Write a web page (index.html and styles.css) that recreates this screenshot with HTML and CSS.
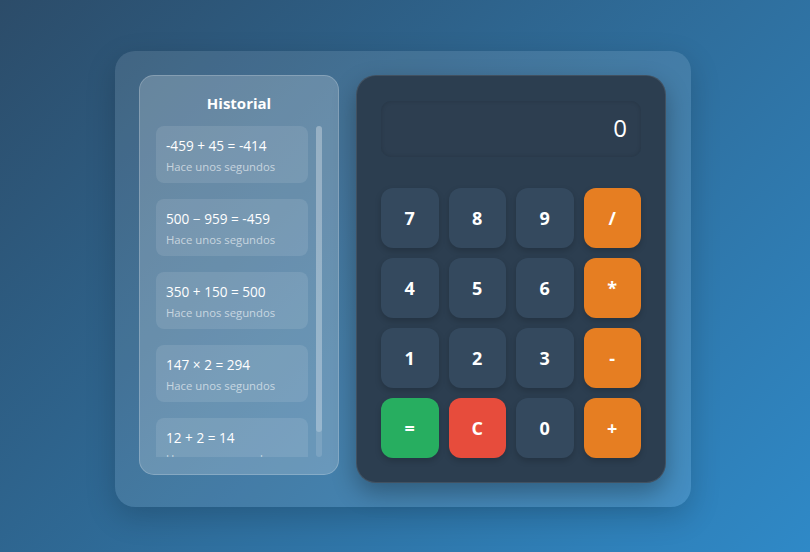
FILE: index.html
```html
<!DOCTYPE html>
<html lang="es">
<head>
<meta charset="utf-8">
<title>Calculadora</title>
<link rel="stylesheet" href="styles.css">
</head>
<body>
<div class="app">
  <aside class="history">
    <h2 class="history-title">Historial</h2>
    <div class="history-body">
      <div class="history-list">
        <div class="item"><div class="eq">-459 + 45 = -414</div><div class="time">Hace unos segundos</div></div>
        <div class="item"><div class="eq">500 − 959 = -459</div><div class="time">Hace unos segundos</div></div>
        <div class="item"><div class="eq">350 + 150 = 500</div><div class="time">Hace unos segundos</div></div>
        <div class="item"><div class="eq">147 × 2 = 294</div><div class="time">Hace unos segundos</div></div>
        <div class="item"><div class="eq">12 + 2 = 14</div><div class="time">Hace unos segundos</div></div>
      </div>
      <div class="scrollbar"><div class="thumb"></div></div>
    </div>
  </aside>
  <main class="calc">
    <div class="display">0</div>
    <div class="keys">
      <button class="key">7</button>
      <button class="key">8</button>
      <button class="key">9</button>
      <button class="key op">/</button>
      <button class="key">4</button>
      <button class="key">5</button>
      <button class="key">6</button>
      <button class="key op">*</button>
      <button class="key">1</button>
      <button class="key">2</button>
      <button class="key">3</button>
      <button class="key op">-</button>
      <button class="key eqk">=</button>
      <button class="key clear">C</button>
      <button class="key">0</button>
      <button class="key op">+</button>
    </div>
  </main>
</div>
</body>
</html>
```
FILE: styles.css
```css
* { box-sizing: border-box; }
html, body { height: 100%; }
body {
  margin: 0;
  font-family: "Open Sans", "Noto Sans", sans-serif;
  background: linear-gradient(135deg, #2c4c69 0%, #2f6f9e 55%, #2f89c7 100%);
  display: flex;
  justify-content: center;
  align-items: flex-start;
  padding-top: 51px;
  padding-right: 4px;
}
.app {
  display: flex;
  align-items: flex-start;
  gap: 17px;
  padding: 24px;
  width: 576px;
  height: 456px;
  border-radius: 20px;
  background: rgba(255, 255, 255, 0.1);
  box-shadow: 0 10px 30px rgba(0, 0, 0, 0.18);
}
.history {
  width: 200px;
  height: 400px;
  border-radius: 15px;
  background: rgba(255, 255, 255, 0.2);
  border: 1px solid rgba(255, 255, 255, 0.2);
  padding: 16px 16px 16px 16px;
  display: flex;
  flex-direction: column;
}
.history-title {
  margin: 0 0 12px 0;
  color: #fff;
  font-size: 15px;
  font-weight: 700;
  text-align: center;
  line-height: 22px;
}
.history-body {
  display: flex;
  gap: 8px;
  height: 331px;
}
.history-list {
  width: 152px;
  overflow: hidden;
  display: flex;
  flex-direction: column;
  gap: 16px;
}
.scrollbar {
  width: 6px;
  height: 100%;
  border-radius: 3px;
  background: rgba(255, 255, 255, 0.12);
}
.thumb {
  height: 306px;
  border-radius: 3px;
  background: rgba(255, 255, 255, 0.22);
}
.item {
  flex: none;
  background: rgba(255, 255, 255, 0.1);
  border-radius: 8px;
  padding: 10px 10px 10px 10px;
  height: 57px;
}
.eq {
  color: #fff;
  font-size: 13.6px;
  line-height: 20px;
}
.time {
  color: rgba(255, 255, 255, 0.6);
  font-size: 11.3px;
  line-height: 18px;
  margin-top: 2px;
}
.calc {
  width: 310px;
  height: 408px;
  background: #2c3e50;
  border-radius: 20px;
  border: 1px solid rgba(255, 255, 255, 0.1);
  padding: 25px 24px 24px 24px;
  box-shadow: 0 10px 25px rgba(0, 0, 0, 0.3);
}
.display {
  height: 56px;
  border-radius: 10px;
  background: #2d3e50;
  box-shadow: inset 0 0 4px rgba(0, 0, 0, 0.15);
  color: #fff;
  font-size: 24px;
  font-weight: 400;
  text-align: right;
  line-height: 54px;
  padding-right: 14px;
  margin-bottom: 31px;
}
.keys {
  display: grid;
  grid-template-columns: repeat(4, 1fr);
  grid-auto-rows: 60px;
  gap: 10px;
}
.key {
  border: none;
  border-radius: 12px;
  background: #34495e;
  color: #fff;
  font-family: inherit;
  font-size: 18px;
  font-weight: 700;
  box-shadow: 0 3px 6px rgba(0, 0, 0, 0.18);
  padding: 0;
}
.key.op { background: #e67e22; }
.key.eqk { background: #27ae60; }
.key.clear { background: #e74c3c; }
```
